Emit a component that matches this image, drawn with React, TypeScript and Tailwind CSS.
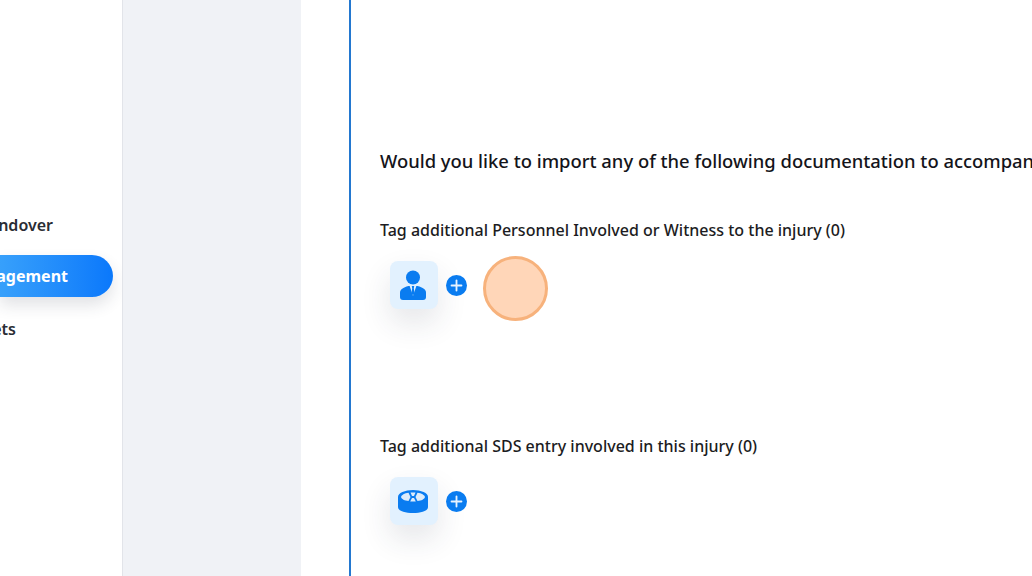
import { Plus } from "lucide-react";

const font = { fontFamily: '"Noto Sans", sans-serif' };

const PersonIcon = () => (
  <svg width="26" height="30" viewBox="0 0 26 30" fill="#0a7cf0">
    <circle cx="13" cy="7.500" r="7" />
    <path d="M0 27v-4.500c0-3 3-5 8.500-6.500h9c5.500 1.500 8.500 3.500 8.500 6.500V27c0 2-1 3-3 3H3c-2 0-3-1-3-3z" />
    <path d="M9.500 15.500 13 26l3.500-10.500z" fill="#e2f1fe" />
    <path d="M11.800 16h2.400l-.4 2.500.8 4.500-1.600 2.500-1.600-2.500.8-4.500z" />
  </svg>
);

const DiscIcon = () => (
  <svg width="30" height="23" viewBox="0 0 30 23">
    <path d="M0 7v10c0 4 7 6 15 6s15-2 15-6V7z" fill="#0a7cf0" />
    <ellipse cx="15" cy="7" rx="15" ry="7" fill="#0a7cf0" />
    <path d="M3 7c.5-2 3.500-4 7.500-4.300L12.500 7l-2 4C6.500 10.800 3.500 9 3 7z" fill="#dcecfb" />
    <path d="M27 7c-.5-2-3.500-4-7.500-4.300L17.500 7l2 4c4-.2 7-2 7.500-4z" fill="#dcecfb" />
    <path d="M12.500 2.400h5L16 6h-2zM14 8h2l1.800 3.400h-5.600z" fill="#dcecfb" />
  </svg>
);

const TagRow = ({ title, children, extra }: { title: string; children: React.ReactNode; extra?: React.ReactNode }) => (
  <div>
    <p className="text-[16px] leading-[22px] font-medium text-[#1c1c22]">{title}</p>
    <div className="mt-[20px] ml-[10px] flex items-center">
      <div className="flex h-[48px] w-[48px] items-center justify-center rounded-[8px] bg-[#e2f1fe] pr-[2px] shadow-[0_14px_30px_rgba(40,50,70,0.12)]">
        {children}
      </div>
      <div className="ml-[8px] flex h-[21px] w-[21px] items-center justify-center rounded-full bg-[#0a7cf0]">
        <Plus size={17} color="#e8f3ff" strokeWidth={2.6} />
      </div>
      {extra}
    </div>
  </div>
);

export default function App() {
  return (
    <div className="flex h-[576px] w-[1032px] overflow-hidden bg-white" style={font}>
      <aside className="flex w-[123px] shrink-0 flex-col items-end overflow-hidden border-r border-[#e2e4e9] bg-white pt-[212px]">
        <div className="flex h-[26px] w-full justify-end pr-[69px] text-[16px] leading-[26px] font-semibold whitespace-nowrap text-[#2a2d34]">
          Handover
        </div>
        <div className="mt-[17px] mr-[9px] flex h-[42px] w-[113px] items-center justify-end rounded-r-full bg-gradient-to-r from-[#37a0fb] to-[#0a78fb] pr-[45px] text-[16px] font-bold whitespace-nowrap text-white shadow-[0_8px_16px_rgba(40,50,70,0.14)]">
          Management
        </div>
        <div className="mt-[19px] flex h-[26px] w-full justify-end pr-[106px] text-[16px] leading-[26px] font-semibold whitespace-nowrap text-[#2a2d34]">
          Assets
        </div>
      </aside>
      <div className="w-[178px] shrink-0 bg-[#f0f2f6]" />
      <div className="w-[48px] shrink-0 bg-white" />
      <main className="min-w-0 flex-1 overflow-hidden border-l-2 border-[#2378d0] pt-[148px] pl-[29px]">
        <h2 className="text-[18.4px] leading-[26px] font-medium whitespace-nowrap text-[#14141a]">
          Would you like to import any of the following documentation to accompany this injury report?
        </h2>
        <div className="mt-[45px]">
          <TagRow
            title="Tag additional Personnel Involved or Witness to the injury (0)"
            extra={
              <div className="mt-[-5px] mb-[-12px] ml-[16px] h-[65px] w-[65px] shrink-0 rounded-full border-[3px] border-[#f7b27c] bg-[#ffd6b8]" />
            }
          >
            <PersonIcon />
          </TagRow>
        </div>
        <div className="mt-[126px]">
          <TagRow title="Tag additional SDS entry involved in this injury (0)">
            <DiscIcon />
          </TagRow>
        </div>
      </main>
    </div>
  );
}
